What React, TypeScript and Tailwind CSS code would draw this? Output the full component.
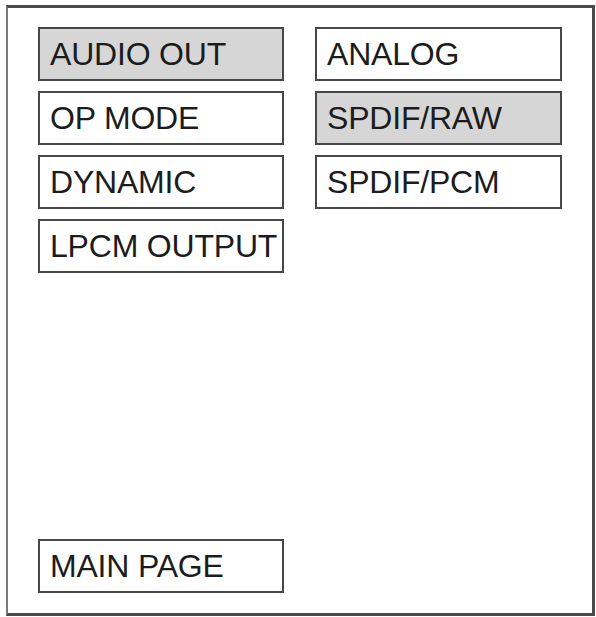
import React from 'react';

type Item = { label: string; active?: boolean };

const leftItems: Item[] = [
    { label: 'AUDIO OUT', active: true },
    { label: 'OP MODE' },
    { label: 'DYNAMIC' },
    { label: 'LPCM OUTPUT' },
];

const rightItems: Item[] = [
    { label: 'ANALOG' },
    { label: 'SPDIF/RAW', active: true },
    { label: 'SPDIF/PCM' },
];

const MenuBox = ({ label, active }: Item) => (
    <div
        className={`h-[54px] flex items-center pl-[10px] border-2 border-[#474747] text-[32px] leading-none text-[#1c1c1c] tracking-[-0.2px] whitespace-nowrap ${
            active ? 'bg-[#d6d6d6]' : 'bg-white'
        }`}
    >
        {label}
    </div>
);

const App = () => {
    return (
        <div className="w-[596px] h-[617px] bg-white pl-[6px] pt-[5px]" style={{ fontFamily: '"Liberation Sans", Arial, sans-serif' }}>
            <div className="w-[589px] h-[611px] border-[3px] border-[#4a4a4a] border-l-[#7a7a7a] border-l-2 pl-[30px] pt-[19px] pb-[20px] flex gap-[31px]">
                {/* left column: main settings + main page at the bottom */}
                <div className="w-[246px] flex flex-col gap-[10px]">
                    {leftItems.map((item) => (
                        <MenuBox key={item.label} {...item} />
                    ))}
                    <div className="mt-auto">
                        <MenuBox label="MAIN PAGE" />
                    </div>
                </div>
                {/* right column: audio out options */}
                <div className="w-[247px] flex flex-col gap-[10px]">
                    {rightItems.map((item) => (
                        <MenuBox key={item.label} {...item} />
                    ))}
                </div>
            </div>
        </div>
    );
};

export default App;
